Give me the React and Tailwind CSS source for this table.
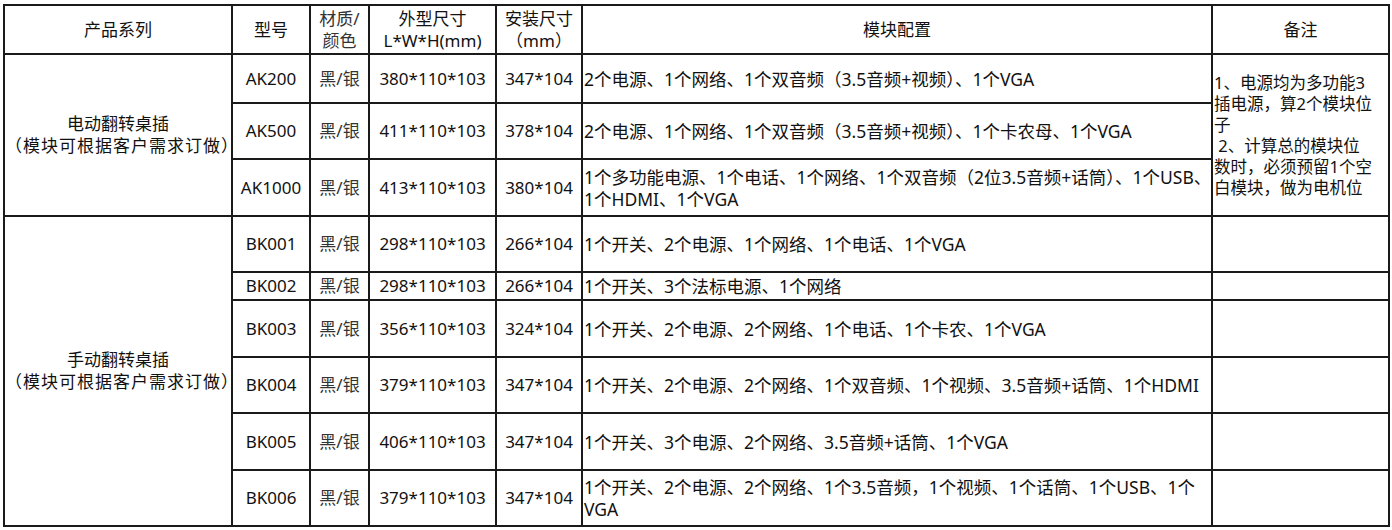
const akRows = [
  { model: "AK200", size: "380*110*103", mount: "347*104", h: "h-[49px]", cfg: ["2个电源、1个网络、1个双音频（3.5音频+视频）、1个VGA"] },
  { model: "AK500", size: "411*110*103", mount: "378*104", h: "h-[56px]", cfg: ["2个电源、1个网络、1个双音频（3.5音频+视频）、1个卡农母、1个VGA"] },
  {
    model: "AK1000",
    size: "413*110*103",
    mount: "380*104",
    h: "h-[57px]",
    cfg: ["1个多功能电源、1个电话、1个网络、1个双音频（2位3.5音频+话筒）、1个USB、", "1个HDMI、1个VGA"],
  },
];

const bkRows = [
  { model: "BK001", size: "298*110*103", mount: "266*104", h: "h-[56px]", cfg: ["1个开关、2个电源、1个网络、1个电话、1个VGA"] },
  { model: "BK002", size: "298*110*103", mount: "266*104", h: "h-[28px]", cfg: ["1个开关、3个法标电源、1个网络"] },
  { model: "BK003", size: "356*110*103", mount: "324*104", h: "h-[57px]", cfg: ["1个开关、2个电源、2个网络、1个电话、1个卡农、1个VGA"] },
  { model: "BK004", size: "379*110*103", mount: "347*104", h: "h-[56px]", cfg: ["1个开关、2个电源、2个网络、1个双音频、1个视频、3.5音频+话筒、1个HDMI"] },
  { model: "BK005", size: "406*110*103", mount: "347*104", h: "h-[57px]", cfg: ["1个开关、3个电源、2个网络、3.5音频+话筒、1个VGA"] },
  { model: "BK006", size: "379*110*103", mount: "347*104", h: "h-[56px]", cfg: ["1个开关、2个电源、2个网络、1个3.5音频，1个视频、1个话筒、1个USB、1个", "VGA"] },
];

const cell = "border-2 border-[#1a1a1a] p-0 text-center align-middle";

function Series({ name }) {
  return (
    <td rowSpan={name === "电动翻转桌插" ? 3 : 6} className={cell + " leading-[22px]"}>
      <div>{name}</div>
      <div className="tracking-[1px]">（模块可根据客户需求订做）</div>
    </td>
  );
}

function Config({ lines }) {
  return (
    <td className="border-2 border-[#1a1a1a] p-0 pl-[1px] text-left align-middle text-[17.5px] leading-[22px] whitespace-nowrap overflow-visible">
      {lines.map((l) => (
        <div key={l}>{l}</div>
      ))}
    </td>
  );
}

function Row({ r, first, series, remark }) {
  return (
    <tr className={r.h}>
      {first && <Series name={series} />}
      <td className={cell}>{r.model}</td>
      <td className={cell + " text-[#333]"}>黑/银</td>
      <td className={cell}>{r.size}</td>
      <td className={cell}>{r.mount}</td>
      <Config lines={r.cfg} />
      {remark}
    </tr>
  );
}

export default function App() {
  return (
    <div className="bg-white w-[1392px] h-[530px] pt-[4px] pl-[3px] text-[#111] font-['Noto_Sans','Noto_Sans_CJK_SC',sans-serif]">
      <table className="table-fixed border-collapse w-[1387px] text-[17px]">
        <colgroup>
          <col className="w-[228px]" />
          <col className="w-[78px]" />
          <col className="w-[59px]" />
          <col className="w-[127px]" />
          <col className="w-[86px]" />
          <col className="w-[630px]" />
          <col className="w-[177px]" />
        </colgroup>
        <thead>
          <tr className="h-[49px] leading-[22px]">
            <th className={cell + " font-normal"}>产品系列</th>
            <th className={cell + " font-normal"}>型号</th>
            <th className={cell + " font-normal text-[#333]"}>
              材质/
              <br />
              颜色
            </th>
            <th className={cell + " font-normal"}>
              外型尺寸
              <br />
              L*W*H(mm)
            </th>
            <th className={cell + " font-normal"}>
              安装尺寸
              <br />
              （mm）
            </th>
            <th className={cell + " font-normal"}>模块配置</th>
            <th className={cell + " font-normal"}>备注</th>
          </tr>
        </thead>
        <tbody>
          {akRows.map((r, i) => (
            <Row
              key={r.model}
              r={r}
              first={i === 0}
              series="电动翻转桌插"
              remark={
                i === 0 ? (
                  <td rowSpan={3} className="border-2 border-[#1a1a1a] p-0 pl-[1px] text-left align-middle text-[16.5px] leading-[21px] whitespace-pre">
                    {"1、电源均为多功能3\n插电源，算2个模块位\n子\n 2、计算总的模块位\n数时，必须预留1个空\n白模块，做为电机位"}
                  </td>
                ) : null
              }
            />
          ))}
          {bkRows.map((r, i) => (
            <Row key={r.model} r={r} first={i === 0} series="手动翻转桌插" remark={<td className={cell} />} />
          ))}
        </tbody>
      </table>
    </div>
  );
}
